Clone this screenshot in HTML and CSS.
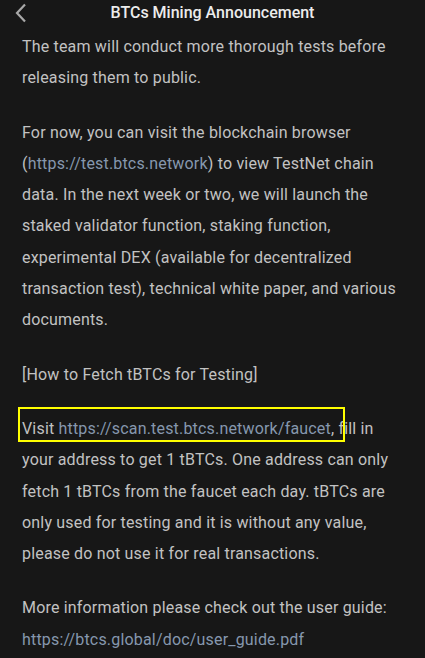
FILE: index.html
```html
<!DOCTYPE html>
<html>
<head>
<meta charset="utf-8">
<link rel="stylesheet" href="styles.css">
</head>
<body>
<header class="topbar">
  <span class="back"><svg width="14" height="20" viewBox="0 0 14 20"><path d="M11 1.5 L3 10 L11 18.5" fill="none" stroke="#a8a8a8" stroke-width="2.2"/></svg></span>
  <h1 class="title">BTCs Mining Announcement</h1>
</header>
<main class="content">
  <p>The team will conduct more thorough tests before releasing them to public.</p>
  <p>For now, you can visit the blockchain browser (<span class="link">https://test.btcs.network</span>) to view TestNet chain data. In the next week or two, we will launch the staked validator function, staking function, experimental DEX (available for decentralized transaction test), technical white paper, and various documents.</p>
  <p>[How to Fetch tBTCs for Testing]</p>
  <p><span class="mark">Visit <span class="link">https://scan.test.btcs.network/faucet</span>,</span> fill in your address to get 1 tBTCs. One address can only fetch 1 tBTCs from the faucet each day. tBTCs are only used for testing and it is without any value, please do not use it for real transactions.</p>
  <p>More information please check out the user guide: <span class="link">https://btcs.global/doc/user_guide.pdf</span></p>
</main>
</body>
</html>
```
FILE: styles.css
```css
html, body {
  margin: 0;
  padding: 0;
  background: #171717;
}
body {
  width: 425px;
  height: 658px;
  overflow: hidden;
  font-family: Roboto, "Liberation Sans", sans-serif;
}
.topbar {
  height: 31px;
  display: flex;
  align-items: center;
  justify-content: center;
  position: relative;
}
.back {
  position: absolute;
  left: 14px;
  top: 3px;
  width: 14px;
  height: 20px;
}
.back svg { display: block; }
.title {
  margin: 0;
  margin-top: -6px;
  font-size: 16px;
  font-weight: 500;
  color: #ececec;
}
.content {
  padding: 0 22px;
}
.content p {
  margin: 0 0 23px;
  font-size: 16px;
  line-height: 31.3px;
  color: #c2c2c2;
  letter-spacing: 0.18px;
}
.link {
  color: #8697ae;
}
.mark {
  position: relative;
}
.mark::after {
  content: "";
  position: absolute;
  left: -4px;
  right: -11px;
  top: -12px;
  bottom: -4px;
  border: 2px solid #ffff00;
  pointer-events: none;
}
```
